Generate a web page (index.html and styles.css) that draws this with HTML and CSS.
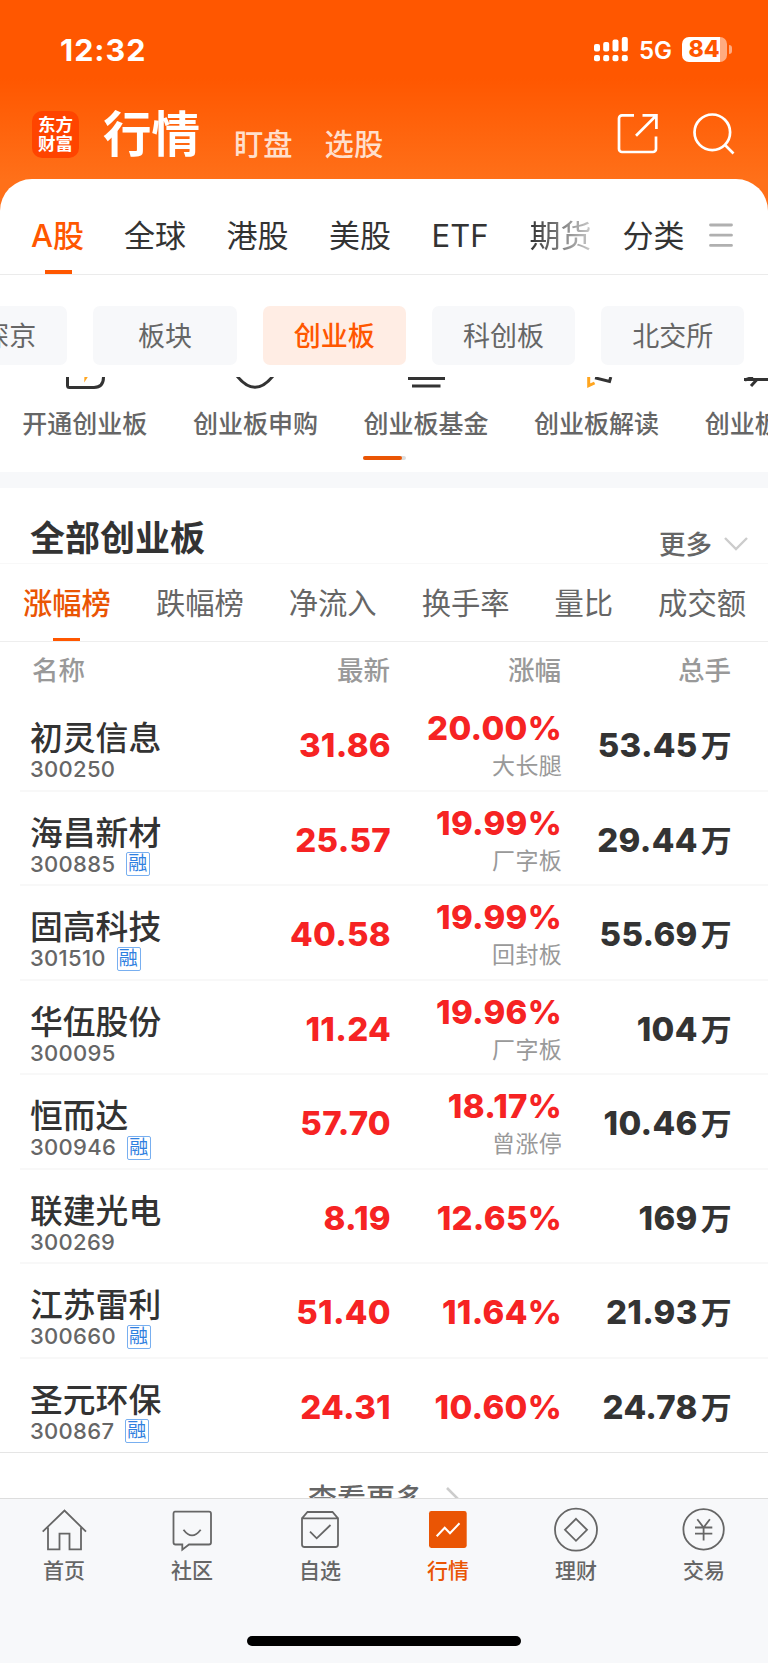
FILE: index.html
```html
<!DOCTYPE html>
<html lang="zh-CN">
<head>
  <meta charset="UTF-8">
  <meta name="viewport" content="width=device-width, initial-scale=1.0">
  <title>行情 - 创业板</title>
  <link rel="stylesheet" href="styles.css">
</head>
<body>
<div class="app">
  <header class="top">
    <div class="status-bar">
      <span class="time">12:32</span>
      <div class="status-right">
        <svg class="signal" width="34" height="25" viewBox="0 0 34 25" fill="#fff">
          <rect x="0" y="7" width="6" height="7.4" rx="2"/>
          <rect x="9.2" y="5" width="6" height="9.4" rx="2"/>
          <rect x="18.5" y="2.6" width="6" height="11.8" rx="2"/>
          <rect x="27.8" y="0" width="6" height="14.4" rx="2"/>
          <rect x="0" y="18" width="6" height="6.3" rx="2"/>
          <rect x="9.2" y="18" width="6" height="6.3" rx="2"/>
          <rect x="18.5" y="18" width="6" height="6.3" rx="2"/>
          <rect x="27.8" y="18" width="6" height="6.3" rx="2"/>
        </svg>
        <span class="network">5G</span>
        <span class="battery">84</span>
        <span class="battery-tip"></span>
      </div>
    </div>
    <div class="title-bar">
      <div class="logo">东方<br>财富</div>
      <h1>行情</h1>
      <a class="top-link">盯盘</a>
      <a class="top-link">选股</a>
      <div class="top-icons">
        <svg width="42" height="42" viewBox="0 0 42 42" fill="none" stroke="#fff" stroke-width="2.7">
          <path d="M17 2.4H5a3 3 0 0 0-3 3V36a3 3 0 0 0 3 3h31a3 3 0 0 0 3-3V23.5"/>
          <path d="M25.5 2.4H39.4V16M39 2.8L19 22.8"/>
        </svg>
        <svg width="42" height="42" viewBox="0 0 42 42" fill="none" stroke="#fff" stroke-width="2.7">
          <circle cx="19.3" cy="19.3" r="17.8"/>
          <path d="M31.5 31.5L40.5 40.5"/>
        </svg>
      </div>
    </div>
  </header>

  <main class="sheet">
    <nav class="market-tabs">
      <a class="active">A股</a>
      <a>全球</a>
      <a>港股</a>
      <a>美股</a>
      <a class="etf">ETF</a>
      <a class="fade">期货</a>
      <a class="sort">分类</a>
      <svg width="24" height="26" viewBox="0 0 24 26" stroke="#b0b0b0" stroke-width="2.8" stroke-linecap="round">
        <path d="M1.5 3H22.5M1.5 13.2H22.5M1.5 23.4H22.5"/>
      </svg>
    </nav>

    <div class="chips">
      <a>沪深京</a>
      <a>板块</a>
      <a class="active">创业板</a>
      <a>科创板</a>
      <a>北交所</a>
    </div>

    <div class="shortcuts">
      <a>
        <svg width="60" height="14" viewBox="0 0 60 14" fill="none" stroke="#333" stroke-width="3">
          <path d="M12.5 0V8.4Q12.5 10.4 14.5 10.4H39Q48.5 10.4 48.5 0"/>
          <path d="M29.4 0h3.4l-3.6 5.4z" fill="#ffa51f" stroke="none"/>
        </svg>
        开通创业板
      </a>
      <a>
        <svg width="60" height="14" viewBox="0 0 60 14" fill="none" stroke="#333" stroke-width="3">
          <path d="M12 -1Q30 21.5 48 -1"/>
        </svg>
        创业板申购
      </a>
      <a>
        <svg width="60" height="14" viewBox="0 0 60 14" fill="none" stroke="#333" stroke-width="3">
          <path d="M12 1.5H49M16 9H44.5"/>
        </svg>
        创业板基金
      </a>
      <a>
        <svg width="60" height="14" viewBox="0 0 60 14" fill="none" stroke-width="3" stroke="#333">
          <path d="M28 .8L42.5 4.5 43.8 0"/>
          <path d="M21.7 0V8.6L27.6 6" stroke="#ffa51f"/>
        </svg>
        创业板解读
      </a>
      <a>
        <svg width="60" height="14" viewBox="0 0 60 14" fill="none" stroke="#333" stroke-width="3">
          <path d="M7 2.5H50M8 3L16 0M20 2.5L14 9"/>
        </svg>
        创业板资讯
      </a>
    </div>
    <div class="pager"><span></span></div>

    <section class="board">
      <div class="board-head">
        <h2>全部创业板</h2>
        <a>更多
          <svg width="24" height="14" viewBox="0 0 24 14" fill="none" stroke="#ccc" stroke-width="2.4">
            <path d="M1 1L12 12 23 1"/>
          </svg>
        </a>
      </div>
      <nav class="rank-tabs">
        <a class="active">涨幅榜</a>
        <a>跌幅榜</a>
        <a>净流入</a>
        <a>换手率</a>
        <a>量比</a>
        <a>成交额</a>
      </nav>

      <div class="row row-head">
        <span>名称</span><span>最新</span><span>涨幅</span><span>总手</span>
      </div>
      <div class="row">
        <div class="stock"><b>初灵信息</b><small>300250</small></div>
        <span class="price">31.86</span>
        <div class="change">20.00%<small>大长腿</small></div>
        <span class="volume">53.45<i>万</i></span>
      </div>
      <div class="row">
        <div class="stock"><b>海昌新材</b><small>300885<em>融</em></small></div>
        <span class="price">25.57</span>
        <div class="change">19.99%<small>厂字板</small></div>
        <span class="volume">29.44<i>万</i></span>
      </div>
      <div class="row">
        <div class="stock"><b>固高科技</b><small>301510<em>融</em></small></div>
        <span class="price">40.58</span>
        <div class="change">19.99%<small>回封板</small></div>
        <span class="volume">55.69<i>万</i></span>
      </div>
      <div class="row">
        <div class="stock"><b>华伍股份</b><small>300095</small></div>
        <span class="price">11.24</span>
        <div class="change">19.96%<small>厂字板</small></div>
        <span class="volume">104<i>万</i></span>
      </div>
      <div class="row">
        <div class="stock"><b>恒而达</b><small>300946<em>融</em></small></div>
        <span class="price">57.70</span>
        <div class="change">18.17%<small>曾涨停</small></div>
        <span class="volume">10.46<i>万</i></span>
      </div>
      <div class="row">
        <div class="stock"><b>联建光电</b><small>300269</small></div>
        <span class="price">8.19</span>
        <span class="price">12.65%</span>
        <span class="volume">169<i>万</i></span>
      </div>
      <div class="row">
        <div class="stock"><b>江苏雷利</b><small>300660<em>融</em></small></div>
        <span class="price">51.40</span>
        <span class="price">11.64%</span>
        <span class="volume">21.93<i>万</i></span>
      </div>
      <div class="row last">
        <div class="stock"><b>圣元环保</b><small>300867<em>融</em></small></div>
        <span class="price">24.31</span>
        <span class="price">10.60%</span>
        <span class="volume">24.78<i>万</i></span>
      </div>
      <div class="see-more">查看更多
        <svg width="14" height="26" viewBox="0 0 14 26" fill="none" stroke="#ccc" stroke-width="2.6">
          <path d="M1 1L13 13 1 25"/>
        </svg>
      </div>
    </section>
  </main>

  <footer class="tab-bar">
    <nav>
      <a>
        <svg width="48" height="48" viewBox="0 0 48 48">
          <path d="M2.7 24.7L24.5 3.5 46 24.7M8 20.5V42.3H19.5V26.7H29.5V42.3H41V20.5"/>
        </svg>
        首页
      </a>
      <a>
        <svg width="48" height="48" viewBox="0 0 48 48">
          <path d="M7 4.7H41Q43 4.7 43 6.7V35.5Q43 37.5 41 37.5H21L14.3 42.6V37.5H7.5Q5.5 37.5 5.5 35.5V6.7Q5.5 4.7 7 4.7Z"/>
          <path d="M15.5 22.7Q24 34 32.7 22.7"/>
        </svg>
        社区
      </a>
      <a>
        <svg width="48" height="48" viewBox="0 0 48 48">
          <path d="M6 11.3L11.5 5H36.5L42 11.3M6 11.3H42V37.5Q42 40 39.5 40H8.5Q6 40 6 37.5Z"/>
          <path d="M14 24.7L20.7 31.3 34.5 18"/>
        </svg>
        自选
      </a>
      <a class="active">
        <svg width="48" height="48" viewBox="0 0 48 48">
          <rect x="5" y="4" width="37.7" height="37" rx="2.4" fill="#ea5504" stroke="none"/>
          <path d="M12.7 29.3L20.7 20.7 26 26.3 35.5 16.3" stroke="#fff" stroke-width="2"/>
        </svg>
        行情
      </a>
      <a>
        <svg width="48" height="48" viewBox="0 0 48 48">
          <circle cx="24" cy="22.7" r="21"/>
          <path d="M24 11.8L35 22.8 24 33.8 13 22.8Z"/>
        </svg>
        理财
      </a>
      <a>
        <svg width="48" height="48" viewBox="0 0 48 48">
          <circle cx="23.6" cy="22.4" r="20.2"/>
          <path d="M17.3 12.2L23.6 20.5 29.9 12.2M15 20.5H32.3M15 26.7H32.3M23.6 20.5V33.5"/>
        </svg>
        交易
      </a>
    </nav>
    <div class="home-indicator"></div>
  </footer>
</div>
</body>
</html>
```
FILE: styles.css
```css
* {
  box-sizing: border-box;
}

body {
  margin: 0;
  font-family: Inter, "Noto Sans CJK SC", sans-serif;
  color: #333;
  background-color: #fff;
}

h1, h2 {
  margin: 0;
}

a, span {
  white-space: nowrap;
}

svg {
  display: block;
  flex: none;
}

.app {
  width: 768px;
  height: 1663px;
  overflow: hidden;
  display: flex;
  flex-direction: column;
  background: linear-gradient(#ff5700 0, #ff5700 78px, #ff7019 180px);
}

/* status bar and title */
.top {
  height: 179px;
  flex: none;
  color: #fff;
}

.status-bar {
  height: 98px;
  padding: 0 36px 0 60px;
  display: flex;
  justify-content: space-between;
  align-items: center;
}

.time {
  font-size: 30.5px;
  font-weight: 700;
  letter-spacing: 1px;
}

.status-right {
  display: flex;
  align-items: center;
}

.network {
  margin: 2px 10px 0 11px;
  font-size: 24px;
  font-weight: 600;
  line-height: 25px;
}

.battery {
  width: 45px;
  height: 25px;
  padding-right: 1px;
  border-radius: 7px;
  background: linear-gradient(to right, #fff 38px, #ffab80 38px);
  color: #ff5700;
  font-size: 23px;
  font-weight: 800;
  line-height: 25px;
  text-align: center;
}

.battery-tip {
  width: 3px;
  height: 9px;
  margin-left: 2px;
  border-radius: 0 4px 4px 0;
  background-color: #ffab80;
}

.title-bar {
  height: 72px;
  padding: 0 33px 0 32px;
  display: flex;
  align-items: center;
}

.logo {
  width: 47px;
  height: 47px;
  padding-top: 4px;
  border-radius: 10px;
  background-color: #ff4400;
  font-size: 17.5px;
  font-weight: 700;
  line-height: 19px;
  text-align: center;
}

.title-bar h1 {
  margin: 1px 34px 0 24px;
  font-size: 48.5px;
  font-weight: 700;
  line-height: 72px;
}

.top-link {
  margin: 21px 32px 0 0;
  font-size: 29.3px;
  font-weight: 500;
  line-height: 40px;
  color: #ffdfcc;
}

.top-icons {
  margin-left: auto;
  display: flex;
  gap: 34px;
}

/* white sheet */
.sheet {
  flex: 1;
  min-height: 0;
  overflow: hidden;
  border-radius: 32px 32px 0 0;
  background-color: #fff;
}

.market-tabs {
  height: 96px;
  padding: 18px 35px 0 31px;
  border-bottom: 1px solid #ebebeb;
  display: flex;
  align-items: flex-start;
  font-size: 31px;
  line-height: 78px;
}

.market-tabs a {
  width: 102.5px;
}

.market-tabs a.active {
  width: 93px;
  background: linear-gradient(#ff5700, #ff5700) 14px 73px / 27px 4px no-repeat;
  color: #ff5700;
  font-weight: 500;
}

.market-tabs .etf {
  width: 98px;
}

.market-tabs .fade {
  width: 93px;
  background: linear-gradient(to right, #333, #ccc 62px);
  -webkit-background-clip: text;
  background-clip: text;
  color: transparent;
}

.market-tabs .sort {
  width: auto;
}

.market-tabs svg {
  margin: 25px 0 0 auto;
}

.chips {
  height: 102px;
  padding-top: 31px;
  display: flex;
  gap: 26px;
  margin-left: -76px;
}

.chips a {
  width: 143.3px;
  height: 59px;
  flex: none;
  border-radius: 7px;
  background-color: #f7f8fa;
  color: #666;
  font-size: 27px;
  line-height: 62px;
  text-align: center;
}

.chips .active {
  background-color: #ffede4;
  color: #ff5700;
  font-weight: 500;
}

.shortcuts {
  display: flex;
  margin-left: -0.5px;
}

.shortcuts a {
  width: 170.6px;
  flex: none;
  display: flex;
  flex-direction: column;
  align-items: center;
  font-size: 25px;
  font-weight: 500;
  line-height: 66px;
  color: #666;
}

.pager {
  width: 43px;
  height: 4px;
  margin: -1px auto 12px;
  border-radius: 2px;
  background-color: #ddd;
}

.pager span {
  display: block;
  width: 39px;
  height: 4px;
  border-radius: 2px;
  background-color: #ea5504;
}

/* stock ranking */
.board {
  border-top: 16px solid #f7f8fa;
}

.board-head {
  height: 76px;
  padding: 0 20px 0 30px;
  border-bottom: 1px solid #f8f8f8;
  display: flex;
  justify-content: space-between;
}

.board-head h2 {
  font-size: 35px;
  font-weight: 700;
  line-height: 101px;
}

.board-head a {
  height: 76px;
  padding-top: 35px;
  display: flex;
  align-items: center;
  gap: 12px;
  color: #666;
  font-size: 26.5px;
  font-weight: 500;
  line-height: 38px;
}

.rank-tabs {
  height: 78px;
  padding: 0 22px 0 23px;
  border-bottom: 1px solid #eee;
  display: flex;
  justify-content: space-between;
  color: #666;
  font-size: 29.3px;
  line-height: 79px;
}

.rank-tabs .active {
  background: linear-gradient(#ff5700, #ff5700) 30px 74px / 27px 3px no-repeat;
  color: #ea5504;
  font-weight: 500;
}

.row {
  height: 94.5px;
  margin-left: 20px;
  padding: 0 36px 0 10px;
  border-bottom: 2px solid #f8f8f8;
  display: grid;
  grid-template-columns: 200px 161px 171px 170px;
  text-align: right;
}

.row-head {
  height: 55px;
  border: none;
  color: #999;
  font-size: 26.5px;
  font-weight: 500;
  line-height: 57px;
}

.row-head span {
  padding-right: 1px;
}

.row-head span:first-child {
  padding-left: 2px;
  text-align: left;
}

.row.last {
  margin-left: 0;
  padding-left: 30px;
  border-bottom: 1px solid #e5e5e5;
}

.stock {
  padding-top: 23px;
  text-align: left;
}

.stock b {
  display: block;
  font-size: 32.8px;
  font-weight: 500;
  line-height: 37px;
}

.stock small {
  display: flex;
  align-items: center;
  color: #666;
  font-size: 22px;
  font-weight: 500;
  line-height: 25px;
  letter-spacing: 0.3px;
}

.stock em {
  width: 24px;
  height: 24px;
  margin-left: 11px;
  border: 1px solid #78aff0;
  border-radius: 2px;
  color: #2f80e0;
  font-size: 19px;
  font-style: normal;
  font-weight: 400;
  line-height: 22px;
  letter-spacing: 0;
  text-indent: 1px;
}

.price,
.volume {
  font-size: 33px;
  font-weight: 800;
  line-height: 96px;
  letter-spacing: 0.3px;
}

.price,
.change {
  color: #f62323;
}

.volume i {
  margin-left: 3px;
  font-size: 31px;
  font-style: normal;
  font-weight: 700;
}

.change {
  padding-top: 12px;
  font-size: 33px;
  font-weight: 800;
  line-height: 39px;
  letter-spacing: 0.3px;
}

.change small {
  display: block;
  color: #999;
  font-size: 23px;
  font-weight: 400;
  line-height: 36px;
}

.see-more {
  padding-top: 27px;
  display: flex;
  justify-content: center;
  gap: 22px;
  color: #666;
  font-size: 29px;
  font-weight: 500;
  line-height: 40px;
}

.see-more svg {
  margin-top: 7px;
}

/* bottom navigation */
.tab-bar {
  height: 165px;
  flex: none;
  border-top: 1px solid #ddd;
  background-color: #f7f8fa;
}

.tab-bar nav {
  height: 137px;
  padding-top: 8px;
  display: grid;
  grid-template-columns: repeat(6, 1fr);
}

.tab-bar a {
  display: flex;
  flex-direction: column;
  align-items: center;
  color: #666;
  font-size: 21px;
  font-weight: 500;
  line-height: 32px;
}

.tab-bar a.active {
  color: #ea5504;
}

.tab-bar svg {
  fill: none;
  stroke: #666;
  stroke-width: 1.8;
}

.home-indicator {
  width: 274px;
  height: 10px;
  margin: 0 auto;
  border-radius: 5px;
  background-color: #000;
}
```
